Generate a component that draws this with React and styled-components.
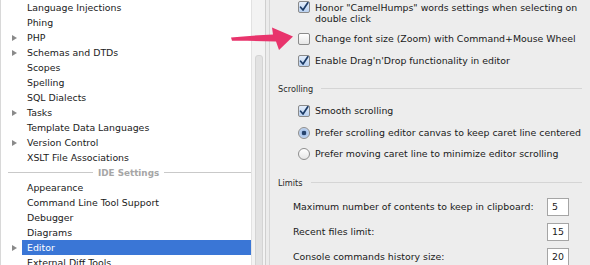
import React from 'react'
import styled, { createGlobalStyle } from 'styled-components'

const GlobalStyle = createGlobalStyle`
  html, body {
    margin: 0;
    padding: 0;
    background: #ededed;
  }
  body {
    font-family: "DejaVu Sans", Verdana, sans-serif;
    font-size: 9.4px;
    color: #1a1a1a;
  }
`

const treeItems = [
  { label: 'Language Injections' },
  { label: 'Phing' },
  { label: 'PHP', expandable: true },
  { label: 'Schemas and DTDs', expandable: true },
  { label: 'Scopes' },
  { label: 'Spelling' },
  { label: 'SQL Dialects' },
  { label: 'Tasks', expandable: true },
  { label: 'Template Data Languages' },
  { label: 'Version Control', expandable: true },
  { label: 'XSLT File Associations' },
  { separator: 'IDE Settings' },
  { label: 'Appearance' },
  { label: 'Command Line Tool Support' },
  { label: 'Debugger' },
  { label: 'Diagrams' },
  { label: 'Editor', expandable: true, selected: true },
  { label: 'External Diff Tools' },
]

const limits = [
  { label: 'Maximum number of contents to keep in clipboard:', value: '5' },
  { label: 'Recent files limit:', value: '15' },
  { label: 'Console commands history size:', value: '20' },
]

const CheckMark = () => (
  <svg width="10" height="10" viewBox="0 0 10 10">
    <path d="M1.6 5.2 L4 8 L8.8 0.8" fill="none" stroke="#1b3a66" strokeWidth="1.7" strokeLinecap="round" strokeLinejoin="round" />
  </svg>
)

const Arrow = () => (
  <ArrowSvg width="70" height="30" viewBox="0 0 70 30">
    <path
      d="M1 15.4 C14 14.2 28 13.2 43 12.4 L42 5.4 L63 14.4 L49 28 L46 19.6 C30 19 15 18.6 2 18.8 Z"
      fill="#e8346c"
    />
  </ArrowSvg>
)

const Checkbox = ({ checked }) => <Box checked={checked}>{checked && <CheckMark />}</Box>

const Radio = ({ checked }) => <RadioDot checked={checked} />

const App = () => {
  return (
    <>
      <GlobalStyle />
      <Window>
        <Sidebar>
          {treeItems.map((item, i) =>
            item.separator ? (
              <Separator key={i}>
                <span>{item.separator}</span>
              </Separator>
            ) : (
              <TreeRow key={i}>
                <Gutter>{item.expandable && <Triangle />}</Gutter>
                <TreeLabel selected={item.selected}>{item.label}</TreeLabel>
              </TreeRow>
            )
          )}
        </Sidebar>
        <ScrollTrack>
          <ScrollThumb />
        </ScrollTrack>
        <Splitter />
        <Content>
          <OptionRow wrapped>
            <Checkbox checked />
            <OptionText>
              Honor "CamelHumps" words settings when selecting on
              <br />
              double click
            </OptionText>
          </OptionRow>
          <OptionRow>
            <Checkbox />
            <OptionText>Change font size (Zoom) with Command+Mouse Wheel</OptionText>
          </OptionRow>
          <OptionRow>
            <Checkbox checked />
            <OptionText>Enable Drag'n'Drop functionality in editor</OptionText>
          </OptionRow>

          <GroupTitle>Scrolling</GroupTitle>
          <OptionRow>
            <Checkbox checked />
            <OptionText>Smooth scrolling</OptionText>
          </OptionRow>
          <OptionRow>
            <Radio checked />
            <OptionText>Prefer scrolling editor canvas to keep caret line centered</OptionText>
          </OptionRow>
          <OptionRow tight>
            <Radio />
            <OptionText>Prefer moving caret line to minimize editor scrolling</OptionText>
          </OptionRow>

          <GroupTitle limits>Limits</GroupTitle>
          {limits.map((row) => (
            <LimitRow key={row.label}>
              <span>{row.label}</span>
              <NumberField>{row.value}</NumberField>
            </LimitRow>
          ))}
        </Content>
        <Arrow />
      </Window>
    </>
  )
}

export default App

const Window = styled.div`
  position: relative;
  width: 590px;
  height: 265px;
  display: flex;
  overflow: hidden;
  background: #ededed;
`

const Sidebar = styled.div`
  width: 250px;
  flex-shrink: 0;
  background: #ffffff;
  border-left: 1px solid #d8d8d8;
  display: flex;
  flex-direction: column;
`

const TreeRow = styled.div`
  height: 15px;
  display: flex;
  align-items: stretch;
  flex-shrink: 0;
`

const Gutter = styled.div`
  width: 21px;
  display: flex;
  align-items: center;
  padding-left: 11px;
  box-sizing: border-box;
`

const Triangle = styled.span`
  width: 0;
  height: 0;
  border-top: 3.5px solid transparent;
  border-bottom: 3.5px solid transparent;
  border-left: 5px solid #8a8a8a;
`

const TreeLabel = styled.div`
  flex: 1;
  display: flex;
  align-items: center;
  padding-left: 5px;
  white-space: nowrap;
  background: ${(p) => (p.selected ? '#3a76d6' : 'transparent')};
  color: ${(p) => (p.selected ? '#ffffff' : '#1a1a1a')};
`

const Separator = styled.div`
  height: 15px;
  flex-shrink: 0;
  display: flex;
  align-items: center;
  gap: 5px;
  padding-left: 7px;
  color: #a6a6a6;
  font-weight: bold;
  font-size: 8.8px;
  &::before,
  &::after {
    content: '';
    flex: 1;
    height: 1px;
    background: #c9c9c9;
  }
  &::before {
    flex: 0 0 85px;
  }
`

const ScrollTrack = styled.div`
  width: 14px;
  flex-shrink: 0;
  background: #f3f3f3;
  border-left: 1px solid #e2e2e2;
  padding-top: 55px;
  box-sizing: border-box;
  display: flex;
  justify-content: center;
`

const ScrollThumb = styled.div`
  width: 6px;
  height: 230px;
  border-radius: 3px;
  background: #e2e2e2;
  border: 1px solid #d4d4d4;
`

const Splitter = styled.div`
  width: 3px;
  flex-shrink: 0;
  background: #ececec;
  border-left: 1px solid #cfcfcf;
  border-right: 1px solid #d6d6d6;
`

const Content = styled.div`
  flex: 1;
  padding: 1px 8px 0 8px;
  display: flex;
  flex-direction: column;
`

const OptionRow = styled.div`
  display: flex;
  align-items: flex-start;
  gap: 5px;
  padding-left: 20px;
  min-height: 12px;
  flex-shrink: 0;
  margin-top: ${(p) => (p.tight ? '-1px' : '0')};
  margin-bottom: ${(p) => (p.wrapped ? '8px' : '10px')};
`

const OptionText = styled.div`
  line-height: 11.5px;
  white-space: nowrap;
  padding-top: 0.5px;
`

const Box = styled.span`
  width: 10px;
  height: 10px;
  flex-shrink: 0;
  border: 1px solid #8a8a8a;
  border-radius: 2px;
  background: ${(p) =>
    p.checked ? 'linear-gradient(#e4eefb, #b9d0ef)' : 'linear-gradient(#ffffff, #e6e6e6)'};
  display: flex;
  align-items: center;
  justify-content: center;
`

const RadioDot = styled.span`
  width: 12px;
  height: 12px;
  flex-shrink: 0;
  box-sizing: border-box;
  border: 1px solid #8e8e8e;
  border-radius: 50%;
  background: ${(p) =>
    p.checked
      ? 'radial-gradient(circle, #27446e 0 2px, #a9c4ea 2.6px, #d6e4f6 100%)'
      : 'linear-gradient(#ffffff, #e6e6e6)'};
`

const GroupTitle = styled.div`
  display: flex;
  align-items: center;
  flex-shrink: 0;
  gap: 8px;
  font-size: 8.2px;
  color: #2a2a2a;
  margin: ${(p) => (p.limits ? '8px 0 10px' : '7px 0 11px')};
  &::after {
    content: '';
    flex: 1;
    height: 1px;
    background: #d5d5d5;
  }
`

const LimitRow = styled.div`
  display: flex;
  align-items: center;
  justify-content: space-between;
  flex-shrink: 0;
  padding-left: 15px;
  padding-right: 13px;
  height: 18px;
  margin-bottom: 7px;
`

const NumberField = styled.div`
  width: 22px;
  height: 18px;
  box-sizing: border-box;
  background: #ffffff;
  border: 1px solid #a5a5a5;
  padding: 0 4px;
  display: flex;
  align-items: center;
`

const ArrowSvg = styled.svg`
  position: absolute;
  left: 230px;
  top: 22px;
`
